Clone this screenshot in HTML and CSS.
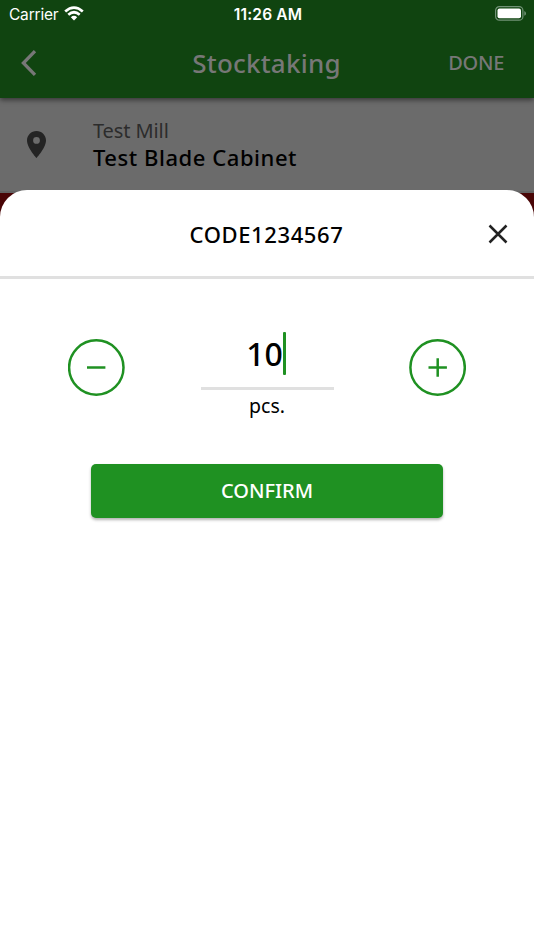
FILE: index.html
```html
<!DOCTYPE html>
<html lang="en">
<head>
<meta charset="utf-8">
<title>Stocktaking</title>
<link rel="stylesheet" href="styles.css">
</head>
<body>
<div class="screen">
  <header class="header">
    <div class="status">
      <div class="carrier"><span class="carrier-name">Carrier</span>
        <svg class="wifi" width="20" height="15" viewBox="0 0 20 15" fill="none" stroke="#fff" stroke-width="2.7"><path d="M1.2 5.4Q10-2.3 18.8 5.4M4.3 8.7Q10 3.8 15.7 8.7"/><path d="M6.8 11.2Q10 8.5 13.2 11.2L10 14.4Z" fill="#fff" stroke="none"/></svg>
      </div>
      <span class="time">11:26 AM</span>
      <svg class="battery" width="32" height="15" viewBox="0 0 32 15"><rect x=".6" y=".6" width="27.3" height="13.6" rx="3.8" fill="none" stroke="#719276" stroke-width="1.2"/><rect x="2.5" y="2.5" width="23.5" height="9.8" rx="2" fill="#fff"/><path d="M29.3 5q1.7.8 1.7 2.4t-1.7 2.4Z" fill="#719276"/></svg>
    </div>
    <div class="nav">
      <svg class="back" width="16" height="26" viewBox="0 0 16 26" fill="none" stroke="#777" stroke-width="3.3"><path d="M14 1.2 2.4 13 14 24.8"/></svg>
      <h1 class="title">Stocktaking</h1>
      <span class="done">DONE</span>
    </div>
  </header>
  <section class="location">
    <svg class="pin" width="19" height="27" viewBox="5 2 14 20" preserveAspectRatio="none" fill="#242424"><path d="M12 2C8.13 2 5 5.13 5 9c0 5.25 7 13 7 13s7-7.75 7-13c0-3.87-3.13-7-7-7zm0 9.5a2.5 2.5 0 1 1 0-5 2.5 2.5 0 0 1 0 5z"/></svg>
    <div class="place">
      <span class="mill">Test Mill</span>
      <span class="cabinet">Test Blade Cabinet</span>
    </div>
  </section>
  <div class="alert"></div>
  <main class="sheet">
    <div class="sheet-head">
      <h2 class="code">CODE1234567</h2>
      <svg class="close" width="20" height="20" viewBox="0 0 20 20" fill="none" stroke="#222" stroke-width="2.5"><path d="m1.5 1.5 17 17m0-17-17 17"/></svg>
    </div>
    <div class="counter">
      <svg class="round" width="57" height="57" viewBox="0 0 57 57" fill="none" stroke="#1f9122" stroke-width="2.5"><circle cx="28.3" cy="28.5" r="27.2"/><path d="M19 28.5h18.4"/></svg>
      <div class="amount">
        <div class="value"><span class="number">10</span><i class="caret"></i></div>
        <span class="unit">pcs.</span>
      </div>
      <svg class="round" width="57" height="57" viewBox="0 0 57 57" fill="none" stroke="#1f9122" stroke-width="2.5"><circle cx="28.6" cy="28.5" r="27.2"/><path d="M19.5 28.5h18.4M28.7 19.3v18.4"/></svg>
    </div>
    <div class="confirm"><span class="confirm-label">CONFIRM</span></div>
  </main>
</div>
</body>
</html>
```
FILE: styles.css
```css
* { box-sizing: border-box; }
body { margin: 0; font-family: "Noto Sans", sans-serif; background: #fff; }
h1, h2 { margin: 0; }
svg { display: block; flex: none; }
span, h1, h2 { white-space: nowrap; }
.screen { position: relative; width: 534px; height: 950px; overflow: hidden; }
.header { position: relative; height: 98px; background: #104410; box-shadow: 0 2px 5px rgba(0,0,0,.5); }
.status { display: grid; grid-template-columns: 1fr auto 1fr; align-items: center; height: 28px; padding: 0 7px 0 9px; color: #fff; font-family: Inter, sans-serif; }
.carrier { display: flex; align-items: center; gap: 6px; font-size: 15.5px; }
.carrier-name { letter-spacing: -.2px; }
.wifi { margin-top: -2px; }
.time { font-size: 15.5px; font-weight: 600; letter-spacing: .2px; }
.battery { justify-self: end; margin-top: -1px; }
.nav { display: grid; grid-template-columns: 1fr auto 1fr; align-items: center; height: 70px; padding: 0 30px 0 21px; color: #777; }
.back { margin-top: -1px; }
.title { font-size: 26px; font-weight: 500; letter-spacing: .2px; margin: -1px 0 0 8px; }
.done { justify-self: end; margin-top: -2px; font-size: 20px; font-weight: 500; letter-spacing: -.3px; }
.location { display: flex; align-items: center; gap: 47px; height: 95px; padding-left: 27px; background: #6b6b6b; border-bottom: 2px solid #626262; }
.pin { margin-top: -1px; }
.place { display: flex; flex-direction: column; }
.mill { font-size: 20px; line-height: 26px; font-weight: 400; letter-spacing: -.1px; color: #2c2c2c; }
.cabinet { font-size: 22px; line-height: 27px; font-weight: 500; letter-spacing: .55px; color: #000; }
.alert { height: 40px; background: #490506; }
.sheet { position: absolute; inset: 190px 0 0; background: #fff; border-radius: 27px 27px 0 0; }
.sheet-head { display: grid; grid-template-columns: 1fr auto 1fr; align-items: center; height: 89px; padding-right: 26px; border-bottom: 3px solid #e0e0e0; }
.code { grid-column: 2; margin: 2px 0 0 25px; font-size: 22px; font-weight: 500; letter-spacing: .6px; color: #000; }
.close { justify-self: end; margin-top: 2px; }
.counter { display: flex; justify-content: space-between; padding: 53px 68px 0; }
.round { margin-top: 7px; }
.amount { width: 133px; text-align: center; }
.value { display: flex; justify-content: center; height: 58px; padding-right: 2px; border-bottom: 3px solid #e0e0e0; }
.number { font-size: 32px; line-height: 44px; font-weight: 500; }
.caret { width: 3px; height: 43px; border-radius: 1px; background: #1f9122; }
.unit { display: block; font-size: 19.5px; line-height: 32px; }
.confirm { display: flex; align-items: center; justify-content: center; width: 352px; height: 54px; margin: 42px auto 0; padding-bottom: 2px; border-radius: 5px; background: #1f9122; box-shadow: 0 2px 3px rgba(0,0,0,.3); color: #fff; font-size: 20px; font-weight: 500; }
```
